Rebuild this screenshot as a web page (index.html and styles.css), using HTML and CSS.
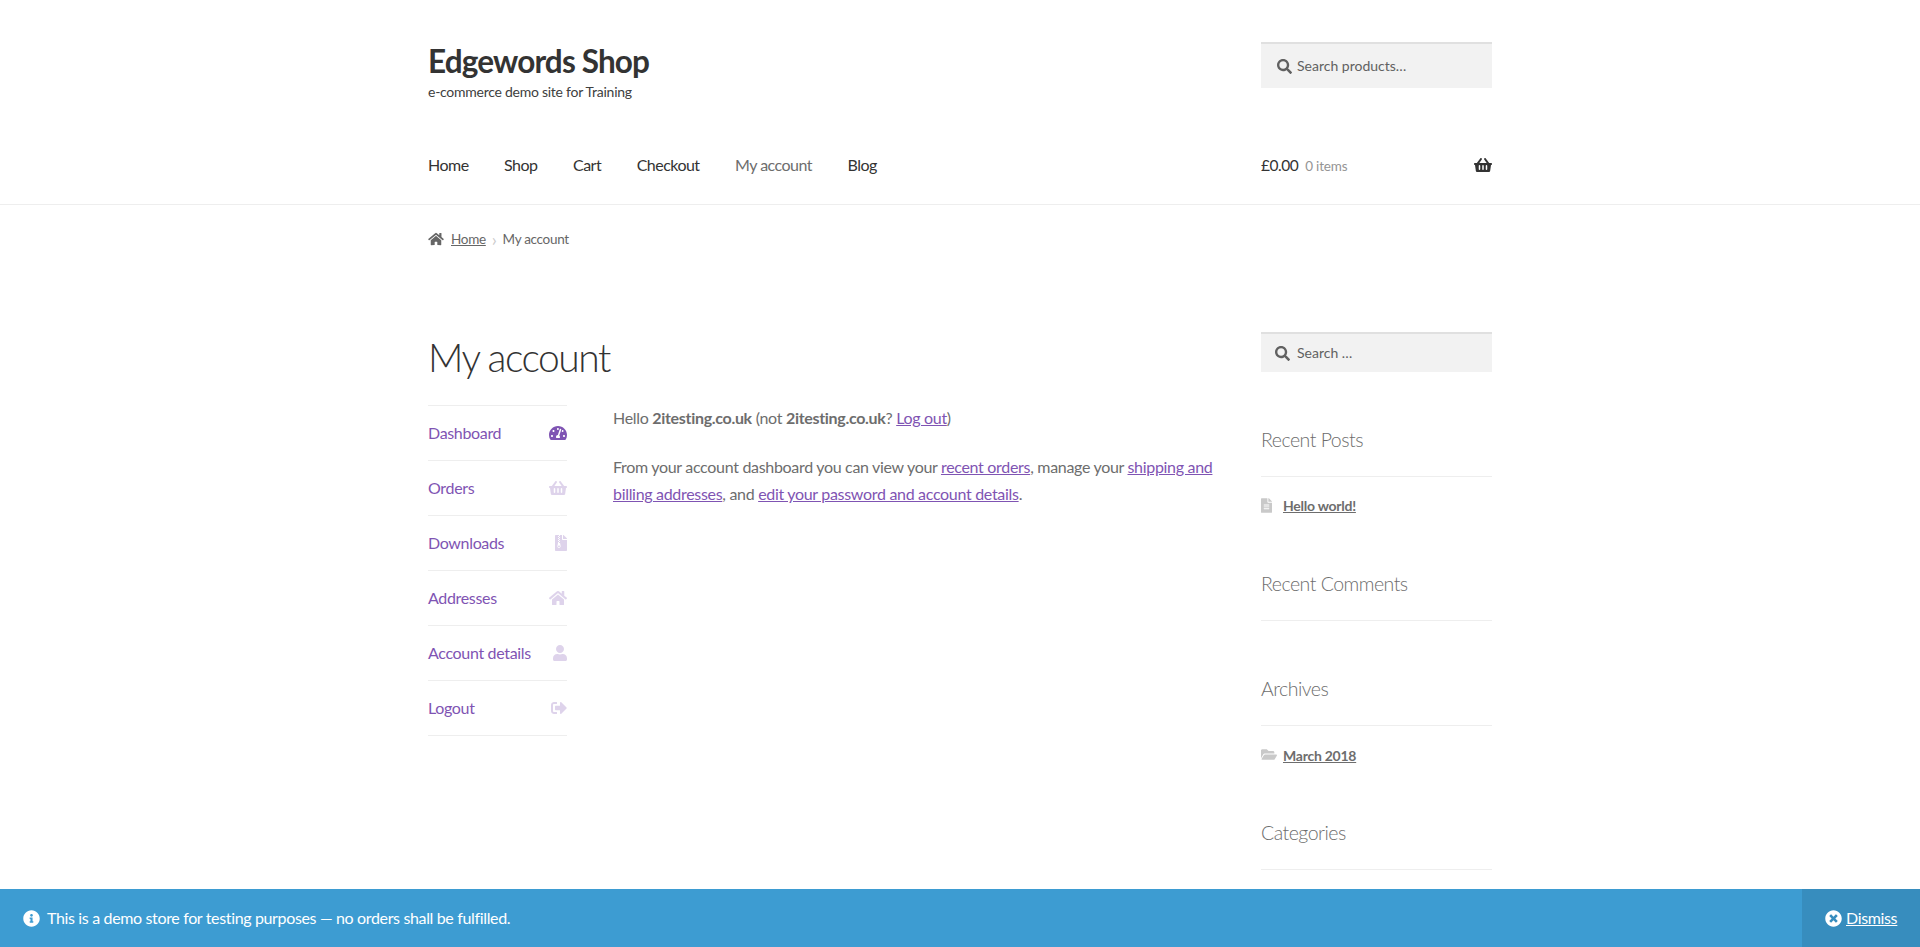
FILE: index.html
```html
<!DOCTYPE html>
<html lang="en">
<head>
    <meta charset="UTF-8">
    <meta name="viewport" content="width=device-width, initial-scale=1.0">
    <title>My account - Edgewords Shop</title>
    <link rel="stylesheet" href="styles.css">
</head>
<body>
    <svg class="icon-defs" aria-hidden="true">
        <symbol id="i-search" viewBox="0 0 512 512"><path d="M505 442.7L405.3 343c-4.5-4.5-10.6-7-17-7H372c27.6-35.3 44-79.7 44-128C416 93.1 322.9 0 208 0S0 93.1 0 208s93.1 208 208 208c48.3 0 92.7-16.4 128-44v16.3c0 6.4 2.5 12.5 7 17l99.7 99.7c9.4 9.4 24.6 9.4 33.9 0l28.3-28.3c9.4-9.4 9.4-24.6.1-34zM208 336c-70.7 0-128-57.2-128-128 0-70.7 57.2-128 128-128 70.7 0 128 57.2 128 128 0 70.7-57.2 128-128 128z"/></symbol>
        <symbol id="i-home" viewBox="0 0 576 512"><path d="M280.37 148.26L96 300.11V464a16 16 0 0 0 16 16l112.06-.29a16 16 0 0 0 15.92-16V368a16 16 0 0 1 16-16h64a16 16 0 0 1 16 16v95.64a16 16 0 0 0 16 16.05L464 480a16 16 0 0 0 16-16V300L295.67 148.26a12.19 12.19 0 0 0-15.3 0zM571.6 251.47L488 182.56V44.05a12 12 0 0 0-12-12h-56a12 12 0 0 0-12 12v72.61L318.47 43a48 48 0 0 0-61 0L4.34 251.47a12 12 0 0 0-1.6 16.9l25.5 31A12 12 0 0 0 45.15 301l235.22-193.74a12.19 12.19 0 0 1 15.3 0L530.9 301a12 12 0 0 0 16.9-1.6l25.5-31a12 12 0 0 0-1.7-16.93z"/></symbol>
        <symbol id="i-basket" viewBox="0 0 576 512"><path d="M576 216v16c0 13.255-10.745 24-24 24h-8l-26.113 182.788C514.509 462.435 494.257 480 470.37 480H105.63c-23.887 0-44.139-17.565-47.518-41.212L32 256h-8c-13.255 0-24-10.745-24-24v-16c0-13.255 10.745-24 24-24h67.341l106.78-146.821c10.395-14.292 30.407-17.453 44.701-7.058 14.293 10.395 17.453 30.408 7.058 44.701L170.477 192h235.046L326.12 82.821c-10.395-14.292-7.234-34.306 7.059-44.701 14.291-10.395 34.306-7.235 44.701 7.058L484.659 192H552c13.255 0 24 10.745 24 24zM312 392V280c0-13.255-10.745-24-24-24s-24 10.745-24 24v112c0 13.255 10.745 24 24 24s24-10.745 24-24zm112 0V280c0-13.255-10.745-24-24-24s-24 10.745-24 24v112c0 13.255 10.745 24 24 24s24-10.745 24-24zm-224 0V280c0-13.255-10.745-24-24-24s-24 10.745-24 24v112c0 13.255 10.745 24 24 24s24-10.745 24-24z"/></symbol>
        <symbol id="i-gauge" viewBox="0 0 576 512"><path d="M288 32C128.94 32 0 160.94 0 320c0 52.8 14.25 102.26 39.06 144.8 5.61 9.62 16.3 15.2 27.44 15.2h443c11.14 0 21.83-5.58 27.44-15.2C561.75 422.26 576 372.8 576 320c0-159.06-128.94-288-288-288zm0 64c14.71 0 26.58 10.13 30.32 23.65-1.11 2.26-2.64 4.23-3.45 6.67l-9.22 27.67c-5.13 3.49-10.97 6.01-17.64 6.01-17.67 0-32-14.33-32-32S270.33 96 288 96zM96 384c-17.67 0-32-14.33-32-32s14.33-32 32-32 32 14.33 32 32-14.33 32-32 32zm48-160c-17.67 0-32-14.33-32-32s14.33-32 32-32 32 14.33 32 32-14.33 32-32 32zm246.77-72.41l-61.33 184C343.13 347.33 352 364.54 352 384c0 11.72-3.38 22.55-8.88 32H232.88c-5.5-9.45-8.88-20.28-8.88-32 0-33.94 26.5-61.43 59.9-63.59l61.34-184.01c4.17-12.56 17.73-19.45 30.36-15.17 12.57 4.19 19.35 17.79 15.17 30.36zm14.66 57.2l15.52-46.55c3.47-1.29 7.13-2.23 11.05-2.23 17.67 0 32 14.33 32 32s-14.33 32-32 32c-11.38-.01-20.89-6.28-26.57-15.22zM480 384c-17.67 0-32-14.33-32-32s14.33-32 32-32 32 14.33 32 32-14.33 32-32 32z"/></symbol>
        <symbol id="i-archive" viewBox="0 0 384 512"><path d="M377 105L279.1 7c-4.5-4.5-10.6-7-17-7H256v128h128v-6.1c0-6.3-2.5-12.4-7-16.9zM128.4 336c-17.9 0-32.4 12.1-32.4 27 0 15 14.6 27 32.5 27s32.4-12.1 32.4-27-14.6-27-32.5-27zM224 136V0h-63.6v32h-32V0H24C10.7 0 0 10.7 0 24v464c0 13.3 10.7 24 24 24h336c13.3 0 24-10.7 24-24V160H248c-13.2 0-24-10.8-24-24zM95.9 32h32v32h-32zm32.3 384c-33.2 0-58-30.4-51.4-62.9L96.4 256v-32h32v-32h-32v-32h32v-32h-32V96h32V64h32v32h-32v32h32v32h-32v32h32v32h-32v32h22.1c5.7 0 10.7 4.1 11.8 9.7l17.3 87.7c6.4 32.4-18.4 62.6-51.4 62.6z"/></symbol>
        <symbol id="i-user" viewBox="0 0 448 512"><path d="M224 256c70.7 0 128-57.3 128-128S294.7 0 224 0 96 57.3 96 128s57.3 128 128 128zm89.6 32h-16.7c-22.2 10.2-46.9 16-72.9 16s-50.6-5.8-72.9-16h-16.7C60.2 288 0 348.2 0 422.4V464c0 26.5 21.5 48 48 48h352c26.5 0 48-21.5 48-48v-41.6c0-74.2-60.2-134.4-134.4-134.4z"/></symbol>
        <symbol id="i-signout" viewBox="0 0 512 512"><path d="M497 273L329 441c-15 15-41 4.5-41-17v-96H152c-13.3 0-24-10.7-24-24v-96c0-13.3 10.7-24 24-24h136V88c0-21.4 25.9-32 41-17l168 168c9.3 9.4 9.3 24.6 0 34zM192 436v-40c0-6.6-5.4-12-12-12H96c-17.7 0-32-14.3-32-32V160c0-17.7 14.3-32 32-32h84c6.6 0 12-5.4 12-12V76c0-6.6-5.4-12-12-12H96c-53 0-96 43-96 96v192c0 53 43 96 96 96h84c6.6 0 12-5.4 12-12z"/></symbol>
        <symbol id="i-file" viewBox="0 0 384 512"><path d="M224 136V0H24C10.7 0 0 10.7 0 24v464c0 13.3 10.7 24 24 24h336c13.3 0 24-10.7 24-24V160H248c-13.2 0-24-10.8-24-24zm64 236c0 6.6-5.4 12-12 12H108c-6.6 0-12-5.4-12-12v-8c0-6.6 5.4-12 12-12h168c6.6 0 12 5.4 12 12v8zm0-64c0 6.6-5.4 12-12 12H108c-6.6 0-12-5.4-12-12v-8c0-6.6 5.4-12 12-12h168c6.6 0 12 5.4 12 12v8zm0-72v8c0 6.6-5.4 12-12 12H108c-6.6 0-12-5.4-12-12v-8c0-6.6 5.4-12 12-12h168c6.6 0 12 5.4 12 12zm96-114.1v6.1H256V0h6.1c6.4 0 12.5 2.5 17 7l97.9 98c4.5 4.5 7 10.6 7 16.9z"/></symbol>
        <symbol id="i-folder" viewBox="0 0 576 512"><path d="M572.694 292.093L500.27 416.248A63.997 63.997 0 0 1 444.989 448H45.025c-18.523 0-30.064-20.093-20.731-36.093l72.424-124.155A64 64 0 0 1 152 256h399.964c18.523 0 30.064 20.093 20.73 36.093zM152 224h328v-48c0-26.51-21.49-48-48-48H272l-64-64H48C21.49 64 0 85.49 0 112v278.046l69.077-118.418C86.214 242.25 117.989 224 152 224z"/></symbol>
        <symbol id="i-info" viewBox="0 0 512 512"><path d="M256 8C119.043 8 8 119.083 8 256c0 136.997 111.043 248 248 248s248-111.003 248-248C504 119.083 392.957 8 256 8zm0 110c23.196 0 42 18.804 42 42s-18.804 42-42 42-42-18.804-42-42 18.804-42 42-42zm56 254c0 6.627-5.373 12-12 12h-88c-6.627 0-12-5.373-12-12v-24c0-6.627 5.373-12 12-12h12v-64h-12c-6.627 0-12-5.373-12-12v-24c0-6.627 5.373-12 12-12h64c6.627 0 12 5.373 12 12v100h12c6.627 0 12 5.373 12 12v24z"/></symbol>
        <symbol id="i-times" viewBox="0 0 512 512"><path d="M256 8C119 8 8 119 8 256s111 248 248 248 248-111 248-248S393 8 256 8zm121.6 313.1c4.7 4.7 4.7 12.3 0 17L338 377.6c-4.7 4.7-12.3 4.7-17 0L256 312l-65.1 65.6c-4.7 4.7-12.3 4.7-17 0L134.4 338c-4.7-4.7-4.7-12.3 0-17l65.6-65-65.6-65.1c-4.7-4.7-4.7-12.3 0-17l39.6-39.6c4.7-4.7 12.3-4.7 17 0l65 65.7 65.1-65.6c4.7-4.7 12.3-4.7 17 0l39.6 39.6c4.7 4.7 4.7 12.3 0 17L312 256l65.6 65.1z"/></symbol>
    </svg>

    <header class="site-header">
        <div class="col-full header-top">
            <div class="branding">
                <a class="site-title" href="#">Edgewords Shop</a>
                <p class="site-tagline">e-commerce demo site for Training</p>
            </div>
            <form class="search-box search-products">
                <svg class="search-icon"><use href="#i-search"/></svg>
                <span>Search products…</span>
            </form>
        </div>
        <div class="col-full header-nav">
            <nav class="main-nav">
                <a href="#">Home</a>
                <a href="#">Shop</a>
                <a href="#">Cart</a>
                <a href="#">Checkout</a>
                <a class="current" href="#">My account</a>
                <a href="#">Blog</a>
            </nav>
            <a class="cart-link" href="#">
                <span class="cart-total">£0.00</span>
                <span class="cart-count">0 items</span>
                <svg class="cart-icon"><use href="#i-basket"/></svg>
            </a>
        </div>
    </header>

    <div class="col-full breadcrumb">
        <svg class="breadcrumb-home"><use href="#i-home"/></svg>
        <a href="#">Home</a>
        <span class="breadcrumb-sep">›</span>
        <span>My account</span>
    </div>

    <div class="col-full content-row">
        <main class="content-main">
            <h1>My account</h1>
            <div class="account">
                <ul class="account-nav">
                    <li><a class="active" href="#">Dashboard <svg class="w-wide"><use href="#i-gauge"/></svg></a></li>
                    <li><a href="#">Orders <svg class="w-wide"><use href="#i-basket"/></svg></a></li>
                    <li><a href="#">Downloads <svg class="w-file"><use href="#i-archive"/></svg></a></li>
                    <li><a href="#">Addresses <svg class="w-wide"><use href="#i-home"/></svg></a></li>
                    <li><a href="#">Account details <svg class="w-user"><use href="#i-user"/></svg></a></li>
                    <li><a href="#">Logout <svg class="w-signout"><use href="#i-signout"/></svg></a></li>
                </ul>
                <div class="account-text">
                    <p>Hello <strong>2itesting.co.uk</strong> (not <strong>2itesting.co.uk</strong>? <a href="#">Log out</a>)</p>
                    <p>From your account dashboard you can view your <a href="#">recent orders</a>, manage your <a href="#">shipping and billing addresses</a>, and <a href="#">edit your password and account details</a>.</p>
                </div>
            </div>
        </main>

        <aside class="sidebar">
            <form class="search-box search-side">
                <svg class="search-icon"><use href="#i-search"/></svg>
                <span>Search …</span>
            </form>
            <section class="widget">
                <h3>Recent Posts</h3>
                <ul>
                    <li><svg class="w-file"><use href="#i-file"/></svg><a href="#">Hello world!</a></li>
                </ul>
            </section>
            <section class="widget">
                <h3>Recent Comments</h3>
            </section>
            <section class="widget">
                <h3>Archives</h3>
                <ul>
                    <li><svg class="w-folder"><use href="#i-folder"/></svg><a href="#">March 2018</a></li>
                </ul>
            </section>
            <section class="widget">
                <h3>Categories</h3>
            </section>
        </aside>
    </div>

    <div class="store-notice">
        <p><svg class="notice-icon"><use href="#i-info"/></svg><span>This is a demo store for testing purposes — no orders shall be fulfilled.</span></p>
        <a class="dismiss" href="#"><svg class="notice-icon"><use href="#i-times"/></svg><span>Dismiss</span></a>
    </div>
</body>
</html>
```

FILE: styles.css
```css
body {
    margin: 0;
    background-color: #fff;
    color: #6d6d6d;
    font-family: "Lato", "Noto Sans", sans-serif;
    font-size: 16px;
    line-height: 27px;
    letter-spacing: -.33px;
}
a {
    color: inherit;
}
svg {
    fill: currentColor;
}
p, ul, h1, h3 {
    margin: 0;
    padding: 0;
}
ul {
    list-style: none;
}
.icon-defs {
    display: none;
}
.col-full {
    width: 1064px;
    margin: 0 auto;
}

/* header */
.site-header {
    border-bottom: 1px solid #eee;
    padding-top: 42px;
}
.header-top {
    display: flex;
    justify-content: space-between;
}
.branding {
    height: 98px;
}
.site-title {
    display: block;
    color: #333;
    font-size: 31.5px;
    font-weight: 700;
    line-height: 38px;
    letter-spacing: -.85px;
    text-decoration: none;
}
.site-tagline {
    color: #404040;
    font-size: 14px;
    line-height: 24px;
    letter-spacing: -.26px;
}
.search-box {
    box-sizing: border-box;
    display: flex;
    align-items: center;
    width: 231px;
    margin: 0;
    background-color: #f2f2f2;
    border-top: 2px solid #e0e0e0;
    color: #616161;
    font-size: 14px;
    letter-spacing: 0;
}
.search-box span {
    margin-bottom: 2px;
}
.search-products {
    height: 46px;
    padding-left: 16px;
}
.search-side {
    height: 40px;
    margin-bottom: 53px;
    padding-left: 14px;
}
.search-icon {
    width: 15px;
    height: 15px;
    margin-right: 5px;
}
.search-side .search-icon {
    margin-right: 7px;
}
.header-nav {
    display: flex;
    justify-content: space-between;
    align-items: center;
    height: 50px;
    padding-bottom: 14px;
}
.main-nav {
    display: flex;
    gap: 35.5px;
    margin-bottom: 2px;
    color: #333;
    letter-spacing: -.52px;
}
.main-nav a {
    text-decoration: none;
}
.main-nav .current {
    color: #6d6d6d;
}
.cart-link {
    display: flex;
    align-items: center;
    width: 231px;
    color: #333;
    text-decoration: none;
}
.cart-total {
    font-size: 15.5px;
    letter-spacing: -.5px;
    margin-right: 7px;
}
.cart-count {
    color: #949494;
    font-size: 13.5px;
    letter-spacing: -.15px;
    margin-top: 2px;
}
.cart-icon {
    width: 18px;
    height: 16px;
    margin-left: auto;
}

/* breadcrumb */
.breadcrumb {
    display: flex;
    align-items: center;
    margin-top: 22px;
    font-size: 13.5px;
    line-height: 24px;
    letter-spacing: -.3px;
    color: #666;
}
.breadcrumb-home {
    width: 16px;
    height: 14px;
    margin-right: 7px;
}
.breadcrumb-sep {
    margin: 0 6px;
    color: #ccc;
    font-size: 18px;
}

/* page body */
.content-row {
    display: flex;
    justify-content: space-between;
    margin-top: 81px;
}
.content-main {
    width: 792px;
}
h1 {
    color: #333;
    font-size: 39px;
    font-weight: 300;
    line-height: 50px;
    letter-spacing: -1.5px;
    margin-bottom: 23px;
}
.account {
    display: flex;
    gap: 46px;
}
.account-nav {
    width: 139px;
    flex-shrink: 0;
    border-top: 1px solid #eee;
    color: #7f54b3;
}
.account-nav li {
    border-bottom: 1px solid #eee;
}
.account-nav a {
    display: flex;
    justify-content: space-between;
    align-items: center;
    box-sizing: border-box;
    height: 54px;
    padding-bottom: 2px;
    text-decoration: none;
}
.account-nav svg {
    height: 16px;
    margin-top: 2px;
    opacity: .25;
}
.account-nav .active svg {
    opacity: 1;
}
.w-wide {
    width: 18px;
}
.w-file {
    width: 12px;
}
.w-user {
    width: 14px;
}
.w-signout {
    width: 16px;
}
.w-folder {
    width: 16px;
}
.account-text {
    margin-top: -1px;
    letter-spacing: -.31px;
}
.account-text p {
    margin-bottom: 22px;
}
.account-text a {
    color: #7f54b3;
}

/* sidebar */
.sidebar {
    width: 231px;
}
.widget {
    margin-bottom: 53px;
}
.widget h3 {
    font-size: 19.5px;
    font-weight: 300;
    line-height: 30px;
    letter-spacing: -.5px;
    padding-bottom: 21px;
    border-bottom: 1px solid #eee;
}
.widget ul {
    margin-top: 18px;
}
.widget li {
    display: flex;
    align-items: center;
    height: 21px;
    font-size: 14px;
    font-weight: 700;
    letter-spacing: -.25px;
}
.widget li svg {
    height: 15px;
    fill: #c9c9c9;
    flex-shrink: 0;
}
.widget li svg.w-file {
    width: 11px;
    margin-right: 11px;
}
.widget li svg.w-folder {
    margin-right: 6px;
}
.w-folder + a {
    margin-top: 2px;
}

/* store notice */
.store-notice {
    position: fixed;
    left: 0;
    right: 0;
    bottom: 0;
    display: flex;
    justify-content: space-between;
    align-items: center;
    height: 58px;
    background-color: #3d9cd2;
    color: #fff;
    letter-spacing: -.35px;
}
.store-notice p {
    display: flex;
    align-items: center;
    padding-left: 23px;
}
.store-notice span {
    margin-bottom: 2px;
}
.notice-icon {
    width: 17px;
    height: 17px;
    margin-right: 7px;
}
.dismiss {
    display: flex;
    align-items: center;
    box-sizing: border-box;
    width: 118px;
    height: 58px;
    padding-left: 23px;
    background-color: #378dbe;
}
.dismiss .notice-icon {
    margin-right: 4px;
}
.dismiss span {
    text-decoration: underline;
}
```
